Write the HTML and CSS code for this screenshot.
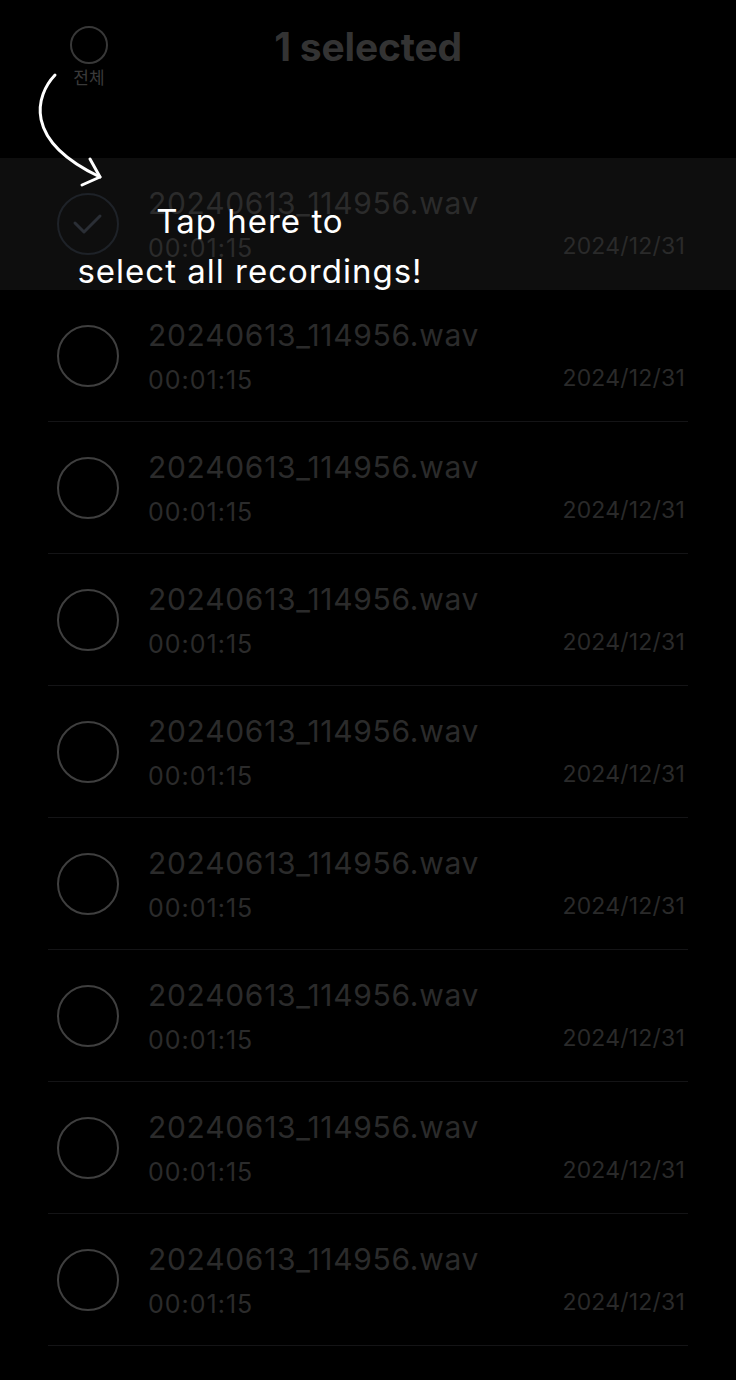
FILE: index.html
```html
<!DOCTYPE html>
<html lang="ko">
<head>
<meta charset="utf-8">
<title>1 selected</title>
<link rel="stylesheet" href="styles.css">
</head>
<body>
<div class="screen">
  <header class="top">
    <div class="all">
      <span class="all-ring"></span>
      <span class="all-label">전체</span>
    </div>
    <h1 class="title">1 selected</h1>
    <div></div>
  </header>

  <ul class="list">
    <li class="row row-hl">
      <div class="row-inner">
        <span class="check check-on">
          <svg width="34" height="26" viewBox="0 0 34 26"><path d="M4 12 L13 21 L29 5" fill="none" stroke="#2a2e35" stroke-width="3" stroke-linecap="round" stroke-linejoin="round"/></svg>
        </span>
        <div class="info">
          <div class="name">20240613_114956.wav</div>
          <div class="dur">00:01:15</div>
        </div>
        <div class="date">2024/12/31</div>
      </div>
    </li>
    <li class="row"><div class="row-inner"><span class="check"></span><div class="info"><div class="name">20240613_114956.wav</div><div class="dur">00:01:15</div></div><div class="date">2024/12/31</div></div></li>
    <li class="row"><div class="row-inner"><span class="check"></span><div class="info"><div class="name">20240613_114956.wav</div><div class="dur">00:01:15</div></div><div class="date">2024/12/31</div></div></li>
    <li class="row"><div class="row-inner"><span class="check"></span><div class="info"><div class="name">20240613_114956.wav</div><div class="dur">00:01:15</div></div><div class="date">2024/12/31</div></div></li>
    <li class="row"><div class="row-inner"><span class="check"></span><div class="info"><div class="name">20240613_114956.wav</div><div class="dur">00:01:15</div></div><div class="date">2024/12/31</div></div></li>
    <li class="row"><div class="row-inner"><span class="check"></span><div class="info"><div class="name">20240613_114956.wav</div><div class="dur">00:01:15</div></div><div class="date">2024/12/31</div></div></li>
    <li class="row"><div class="row-inner"><span class="check"></span><div class="info"><div class="name">20240613_114956.wav</div><div class="dur">00:01:15</div></div><div class="date">2024/12/31</div></div></li>
    <li class="row"><div class="row-inner"><span class="check"></span><div class="info"><div class="name">20240613_114956.wav</div><div class="dur">00:01:15</div></div><div class="date">2024/12/31</div></div></li>
    <li class="row"><div class="row-inner"><span class="check"></span><div class="info"><div class="name">20240613_114956.wav</div><div class="dur">00:01:15</div></div><div class="date">2024/12/31</div></div></li>
  </ul>

  <svg class="arrow" width="90" height="140" viewBox="0 0 90 140">
    <path d="M25 15 C 6 35, -8 80, 70 117" fill="none" stroke="#ffffff" stroke-width="3" stroke-linecap="round"/>
    <path d="M60 99 L 70 117 L 52 125" fill="none" stroke="#ffffff" stroke-width="3" stroke-linecap="round" stroke-linejoin="round"/>
  </svg>
  <p class="tip">Tap here to<br>select all recordings!</p>
</div>
</body>
</html>
```

FILE: styles.css
```css
* { box-sizing: border-box; }
html, body { margin: 0; padding: 0; background: #000; }
body {
  font-family: Inter, "Noto Sans", "Noto Sans CJK KR", sans-serif;
  color: #2b2b2b;
}
.screen {
  position: relative;
  width: 736px;
  height: 1380px;
  background: #000;
  overflow: hidden;
}
.top {
  height: 158px;
  display: grid;
  grid-template-columns: 1fr auto 1fr;
  align-items: start;
}
.all {
  justify-self: start;
  margin-left: 70px;
  margin-top: 26px;
  display: flex;
  flex-direction: column;
  align-items: center;
  gap: 2px;
}
.all-ring {
  width: 38px;
  height: 38px;
  border: 2px solid #383838;
  border-radius: 50%;
}
.all-label {
  font-family: "Noto Sans CJK KR", sans-serif;
  font-size: 17px;
  line-height: 22px;
  color: #3a3a3a;
}
.title {
  margin: 25px 0 0;
  font-size: 39px;
  line-height: 44px;
  font-weight: 700;
  color: #333333;
  letter-spacing: -0.2px;
}
.list {
  list-style: none;
  margin: 0;
  padding: 0;
}
.row-hl { background: #0e0e0e; }
.row-inner {
  margin: 0 48px;
  height: 132px;
  border-bottom: 1px solid #141416;
  display: flex;
  align-items: center;
  padding: 0 3px 0 9px;
}
.row-hl .row-inner { border-bottom-color: transparent; }
.check {
  flex: none;
  width: 62px;
  height: 62px;
  border: 2px solid #3f3f3f;
  border-radius: 50%;
  margin-right: 29px;
  display: flex;
  align-items: center;
  justify-content: center;
}
.check-on { border-color: #1e2228; }
.info {
  flex: 1;
  display: flex;
  flex-direction: column;
  gap: 12px;
}
.name {
  font-size: 30px;
  line-height: 36px;
  letter-spacing: 0.7px;
  color: #2b2b2b;
}
.dur {
  font-size: 25px;
  line-height: 30px;
  letter-spacing: 1px;
  color: #2b2b2b;
}
.date {
  align-self: flex-end;
  margin-bottom: 29px;
  font-size: 23px;
  line-height: 28px;
  letter-spacing: 0.2px;
  color: #2a2a2a;
}
.arrow {
  position: absolute;
  left: 30px;
  top: 60px;
}
.tip {
  position: absolute;
  left: 0;
  top: 196px;
  width: 500px;
  margin: 0;
  text-align: center;
  font-size: 33px;
  line-height: 50px;
  letter-spacing: 1px;
  color: #ffffff;
}
```
